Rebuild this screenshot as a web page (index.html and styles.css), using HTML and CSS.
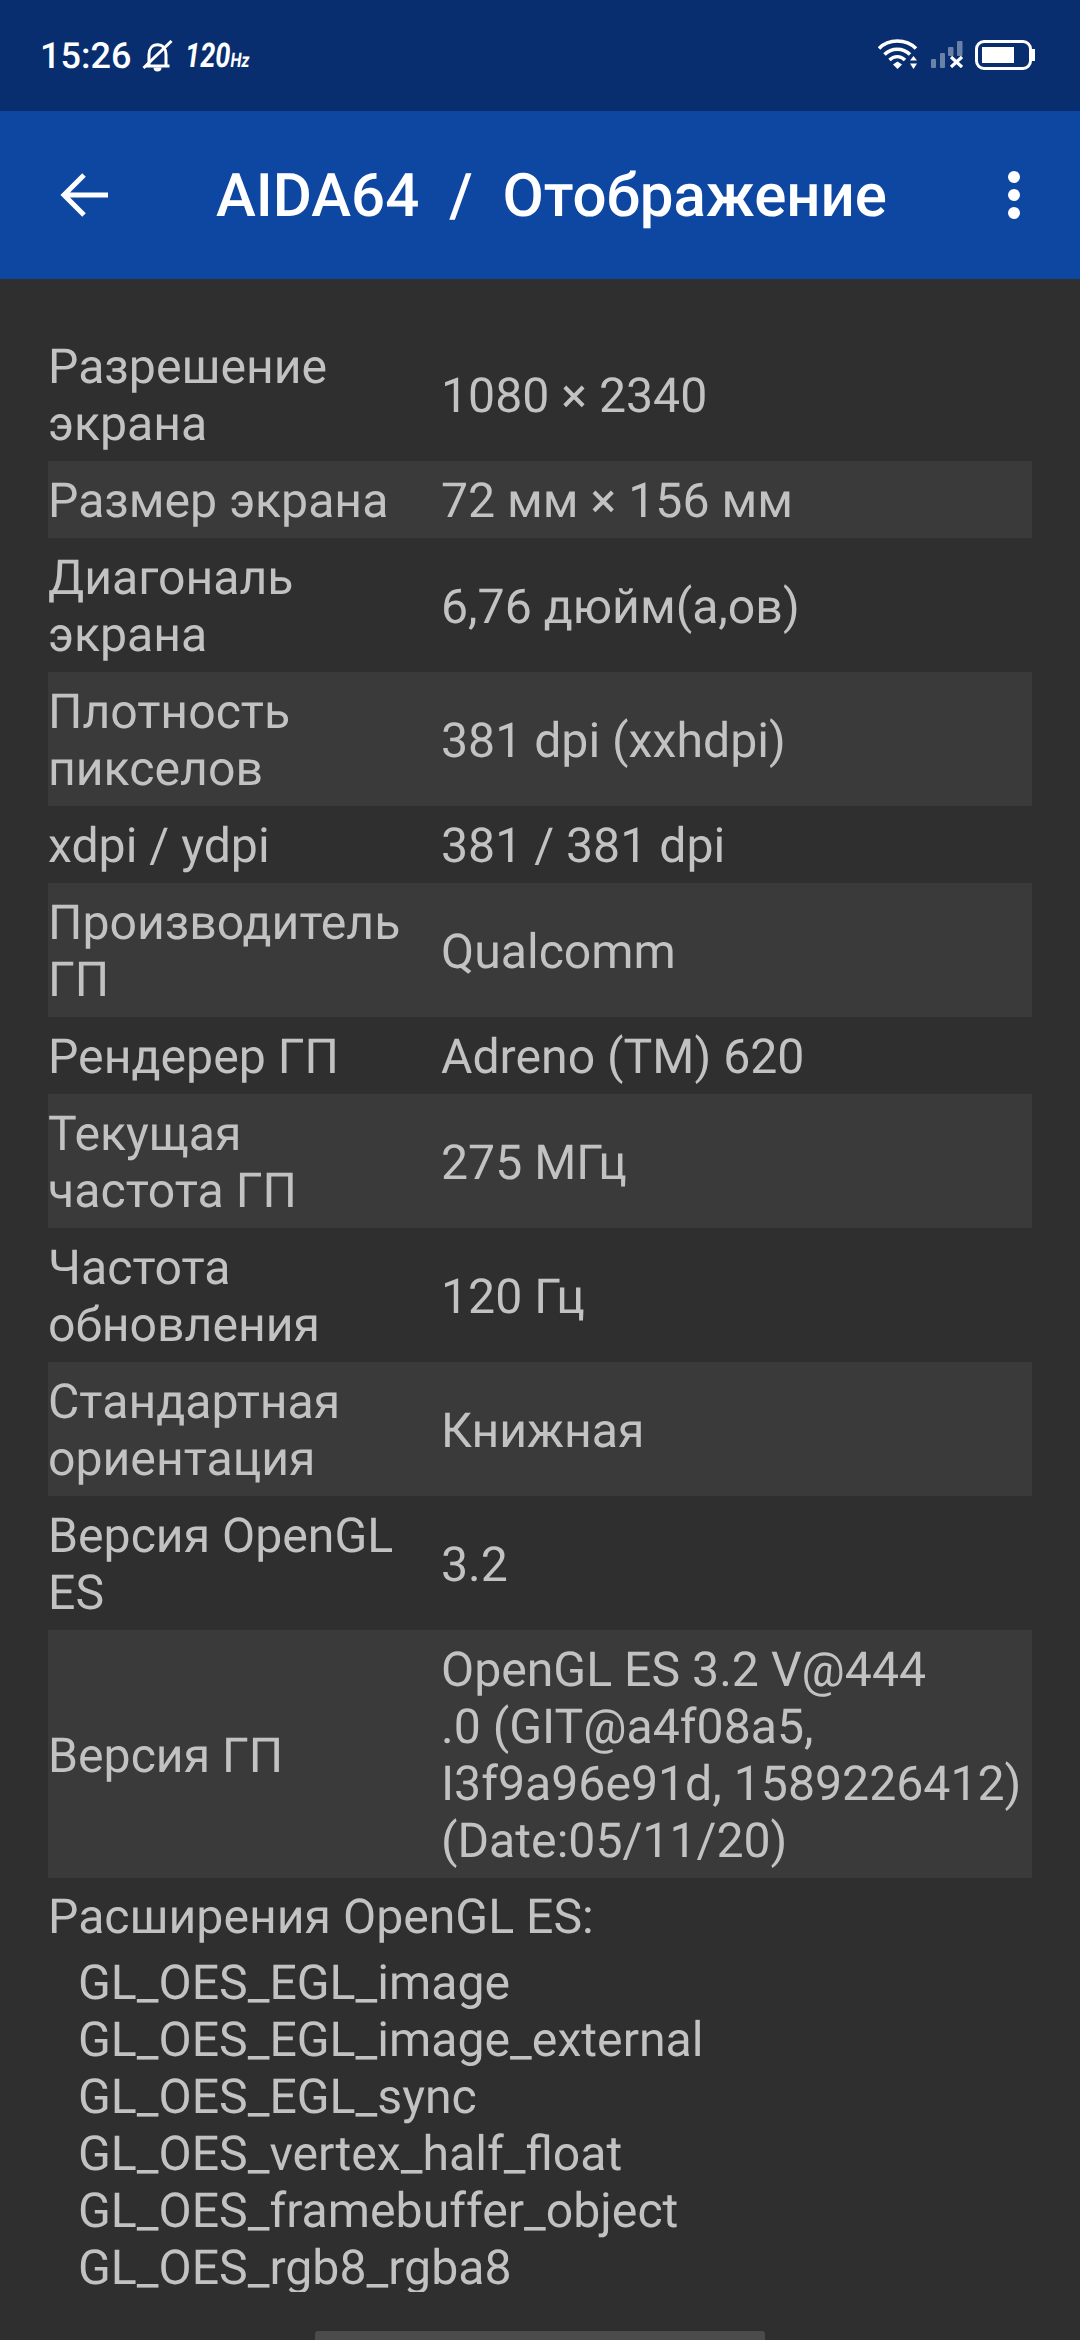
FILE: index.html
```html
<!DOCTYPE html>
<html lang="ru">
  <head>
    <meta charset="UTF-8" />
    <meta name="viewport" content="width=device-width, initial-scale=1.0" />
    <title>AIDA64 / Отображение</title>
    <link rel="stylesheet" href="styles.css">
  </head>
  <body>
    <div class="status-bar">
      <div class="status-left">
        <span class="clock">15:26</span>
        <svg class="bell" width="31" height="32" viewBox="0 0 30 32">
          <path d="M3 26h24M6.500 25.500V14.500C6.500 8.500 10 4.800 15 4.800s8.500 3.700 8.500 9.700V25.500" fill="none" stroke="#fff" stroke-width="3"/>
          <path d="M1 28 29 1" stroke="#fff" stroke-width="3"/>
          <path d="M11 27.500h8a4 4 0 0 1-8 0z" fill="#fff"/>
        </svg>
        <span class="hz">120<small>Hz</small></span>
      </div>
      <div class="status-right">
        <svg class="wifi" width="40" height="32" viewBox="0 0 40 32">
          <path d="M1 9.500C10.500-.5 28-.5 38 9.500" fill="none" stroke="#fff" stroke-width="3.600"/>
          <path d="M6.500 15.500C13.500 8.500 25 8.500 32 15.500" fill="none" stroke="#fff" stroke-width="3.600"/>
          <path d="M11.500 21c4.500-4.500 11-4.500 15.500 0" fill="none" stroke="#fff" stroke-width="3.400"/>
          <path d="M15 25.500 19.500 22.500 24 25.500 19.500 30z" fill="#fff"/>
          <path d="M32 21.500 35.500 17 39 21.500zM32 24.500h7L35.500 30z" fill="#fff"/>
        </svg>
        <svg class="signal" width="32" height="28" viewBox="0 0 32 28">
          <g fill="#fff" fill-opacity=".4">
            <rect x="0" y="19" width="5" height="9" rx="1"/>
            <rect x="9" y="13" width="5" height="15" rx="1"/>
            <rect x="17" y="7" width="5.500" height="9" rx="1"/>
            <rect x="26" y="1" width="5.500" height="15" rx="1"/>
          </g>
          <path d="M20 17 31 27M31 17 20 27" stroke="#fff" stroke-width="3.200"/>
        </svg>
        <div class="battery"><div class="battery-level"></div></div>
      </div>
    </div>

    <div class="toolbar">
      <svg class="back" width="50" height="50" viewBox="0 0 50 50">
        <path d="M49 25H6M25 5 5 25l20 20" fill="none" stroke="#fff" stroke-width="5"/>
      </svg>
      <h1 class="title">AIDA64  /  Отображение</h1>
      <div class="menu"><i></i><i></i><i></i></div>
    </div>

    <div class="content">
      <div class="rows">
        <div class="row"><div class="label">Разрешение<br>экрана</div><div class="value">1080 × 2340</div></div>
        <div class="row"><div class="label">Размер экрана</div><div class="value">72 мм × 156 мм</div></div>
        <div class="row"><div class="label">Диагональ<br>экрана</div><div class="value">6,76 дюйм(а,ов)</div></div>
        <div class="row"><div class="label">Плотность<br>пикселов</div><div class="value">381 dpi (xxhdpi)</div></div>
        <div class="row"><div class="label">xdpi / ydpi</div><div class="value">381 / 381 dpi</div></div>
        <div class="row"><div class="label">Производитель<br>ГП</div><div class="value">Qualcomm</div></div>
        <div class="row"><div class="label">Рендерер ГП</div><div class="value">Adreno (TM) 620</div></div>
        <div class="row"><div class="label">Текущая<br>частота ГП</div><div class="value">275 МГц</div></div>
        <div class="row"><div class="label">Частота<br>обновления</div><div class="value">120 Гц</div></div>
        <div class="row"><div class="label">Стандартная<br>ориентация</div><div class="value">Книжная</div></div>
        <div class="row"><div class="label">Версия OpenGL<br>ES</div><div class="value">3.2</div></div>
        <div class="row"><div class="label">Версия ГП</div><div class="value">OpenGL ES 3.2 V@444<br>.0 (GIT@a4f08a5,<br>I3f9a96e91d, 1589226412)<br>(Date:05/11/20)</div></div>
      </div>

      <div class="ext-title">Расширения OpenGL ES:</div>
      <ul class="ext-list">
        <li>GL_OES_EGL_image</li>
        <li>GL_OES_EGL_image_external</li>
        <li>GL_OES_EGL_sync</li>
        <li>GL_OES_vertex_half_float</li>
        <li>GL_OES_framebuffer_object</li>
        <li>GL_OES_rgb8_rgba8</li>
      </ul>
    </div>

    <div class="scroll-thumb"></div>
  </body>
</html>
```

FILE: styles.css
```css
* {
  margin: 0;
  padding: 0;
  box-sizing: border-box;
}

body {
  position: relative;
  width: 1080px;
  height: 2340px;
  overflow: hidden;
  display: flex;
  flex-direction: column;
  background-color: #2f2f2f;
  font-family: Roboto, "Noto Sans", sans-serif;
  text-rendering: geometricPrecision;
}

.status-bar {
  height: 111px;
  padding: 36px 48px 0 40px;
  display: flex;
  justify-content: space-between;
  align-items: flex-start;
  background-color: #082e6f;
  color: #fff;
}

.status-left {
  display: flex;
  align-items: center;
  height: 40px;
}

.clock {
  font-size: 36px;
  font-weight: 500;
}

.bell {
  margin-left: 11px;
}

.hz {
  display: inline-block;
  margin-left: 12px;
  font-size: 34px;
  font-weight: 700;
  font-style: italic;
  transform: scaleX(0.8);
  transform-origin: left center;
}

.hz small {
  font-size: 20px;
}

.status-right {
  display: flex;
  align-items: flex-start;
  height: 40px;
}

.wifi {
  margin-top: 3px;
}

.signal {
  margin-top: 4px;
  margin-left: 13px;
}

.battery {
  position: relative;
  width: 57px;
  height: 30px;
  margin-top: 4px;
  margin-left: 12px;
  padding: 4px;
  border: 3px solid #fff;
  border-radius: 9px;
}

.battery::after {
  content: "";
  position: absolute;
  top: 6px;
  right: -6px;
  width: 3px;
  height: 12px;
  background-color: #fff;
}

.battery-level {
  width: 32px;
  height: 100%;
  background-color: #fff;
}

.toolbar {
  height: 168px;
  padding: 0 60px 0 59px;
  display: flex;
  align-items: center;
  background-color: #0e47a1;
  color: #fff;
}

.title {
  margin-left: 107px;
  flex: 1;
  font-size: 60px;
  font-weight: 500;
  white-space: pre;
}

.menu {
  display: flex;
  flex-direction: column;
  gap: 6px;
}

.menu i {
  display: block;
  width: 12px;
  height: 12px;
  border-radius: 50%;
  background-color: #fff;
}

.content {
  height: 2013px;
  overflow: hidden;
  padding: 48px 48px 0;
  color: #c2c2c2;
  font-size: 48.2px;
  line-height: 57px;
}

.row {
  display: flex;
  align-items: center;
  padding: 11px 0 9px;
}

.row:nth-child(even) {
  background-color: #3a3a3a;
}

.label {
  width: 393px;
}

.value {
  flex: 1;
}

.ext-title {
  margin-top: 10px;
}

.ext-list {
  list-style: none;
  padding-left: 30px;
  padding-top: 9px;
}

.scroll-thumb {
  position: absolute;
  left: 315px;
  bottom: 0;
  width: 450px;
  height: 9px;
  border-radius: 3px 3px 0 0;
  background-color: #4a4b4d;
}
```
